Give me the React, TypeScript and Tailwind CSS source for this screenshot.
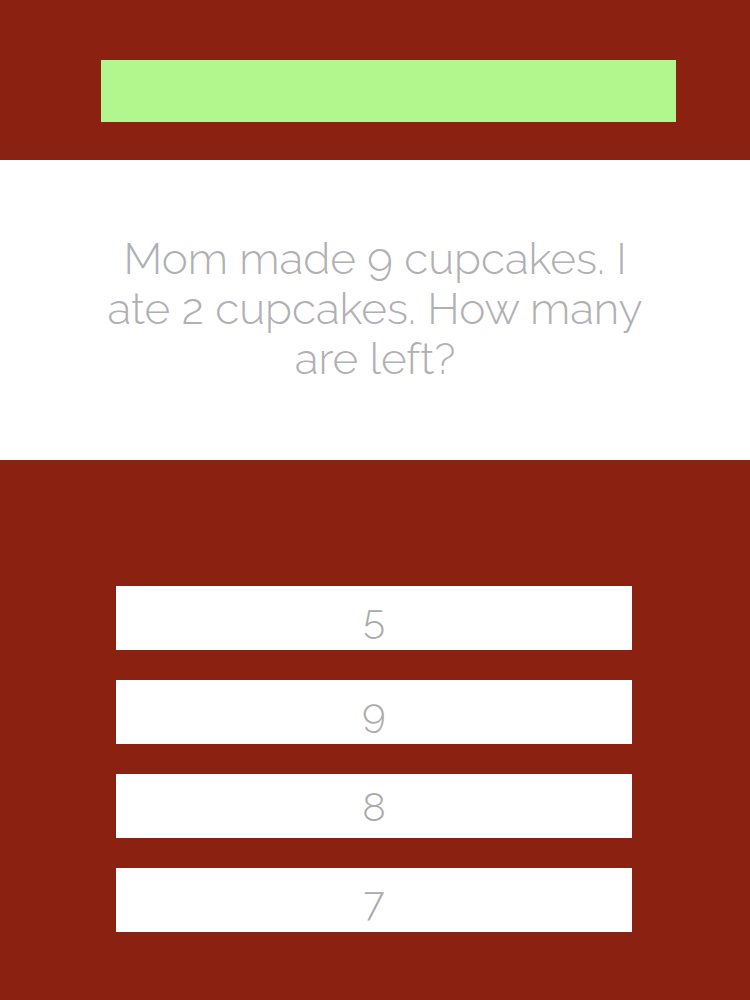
export default function App() {
  const answers = ["5", "9", "8", "7"];

  return (
    <div
      className="w-[750px] h-[1000px] bg-[#8a2111] flex flex-col"
      style={{ fontFamily: "Raleway, Lato, 'Open Sans', sans-serif" }}
    >
      {/* progress bar */}
      <div className="h-[160px] pt-[60px] pl-[101px]">
        <div className="w-[575px] h-[62px] bg-[#b2f68e]" />
      </div>

      {/* question */}
      <div className="h-[300px] bg-white flex items-center justify-center pb-[2px]">
        <p className="w-[560px] text-center text-[44px] leading-[50px] font-light text-[#b1afb4]">
          Mom made 9 cupcakes. I ate 2 cupcakes. How many are left?
        </p>
      </div>

      {/* answers */}
      <div className="flex flex-col gap-[30px] pt-[126px] pl-[116px]">
        {answers.map((a) => (
          <button
            key={a}
            className="w-[516px] h-[64px] bg-white flex items-center justify-center pt-[2px] text-[40px] font-light text-[#aaaaaa]"
          >
            {a}
          </button>
        ))}
      </div>
    </div>
  );
}
